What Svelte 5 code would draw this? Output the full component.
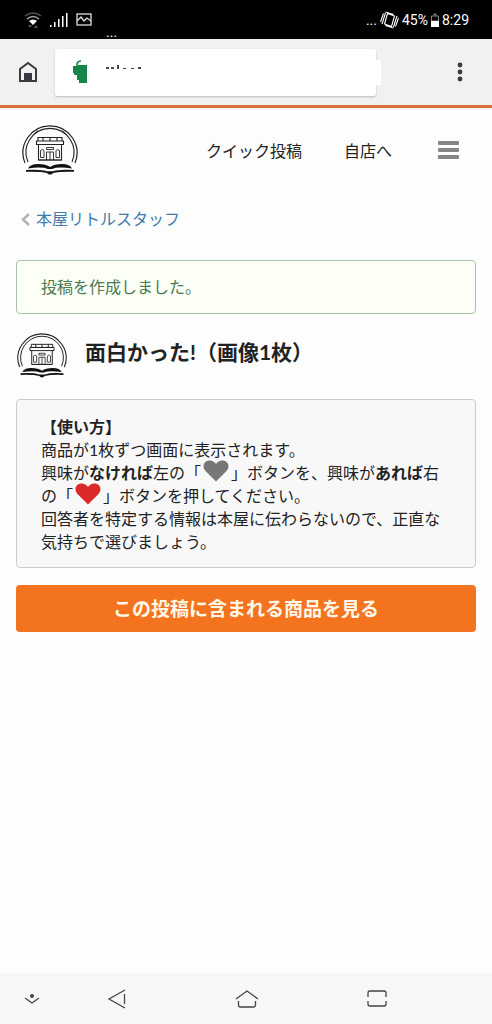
<script>
	let address = '';
	const signal = [2, 5, 8, 11, 14];
</script>

{#snippet shopLogo(size)}
	<svg class="logo {size}" viewBox="0 0 56 50" role="img" aria-label="本屋リトルスタッフ">
		<g fill="none" stroke="#222">
			<path d="M3 38A27 27 0 1 1 53 38" stroke-width="1.2" />
			<path d="M6 37A24 24 0 1 1 50 37" stroke-width="1.1" />
			<path d="M16 12.500h24v3.500H16zM14.500 16h27v3.500h-27zM16.500 19.500v15.500h23V19.500M21 12.500v3.500M28 12.500v3.500M35 12.500v3.500" stroke-width="1.1" />
			<path d="M18.500 32.500v-7q1.500-2 3.500 0v7zM34 32.500v-7q1.500-2 3.500 0v7zM24.500 35v-8h7v8M28 27v8M24.500 24.500v-2h7v2zM16.500 35h23" stroke-width=".9" />
		</g>
		<path d="M6 43.500Q8 39 16 39q8 0 12 3 4-3 12-3 8 0 10 4.500-14-2-20 .5h-4q-6-2.500-20-.5z" fill="#111" />
		<path d="M4 45q14-1 21 1.200h6Q38 44 52 45v1.800q-14-.5-21 1.200-1 1.500-3 1.500T25 48q-7-1.700-21-1.200z" fill="#111" />
	</svg>
{/snippet}

{#snippet heart(color)}
	<svg class="heart {color}" viewBox="0 0 26 22" aria-hidden="true">
		<path d="M13 21.500 2.500 11C-1.500 6.500 1 .5 6.500 .5 10 .5 12 2.500 13 4 14 2.500 16 .5 19.500 .5 25 .5 27.500 6.500 23.500 11z" />
	</svg>
{/snippet}

<div class="screen">
	<div class="status">
		<div class="status-left">
			<svg width="18" height="18" viewBox="0 0 18 18" fill="none">
				<path d="M1 5q8-6 16 0" stroke="#555" stroke-width="1.5" />
				<path d="M3 8q6-5 12 0" stroke="#aaa" stroke-width="1.5" />
				<path d="M5 10q4-3 8 0l-4 4z" fill="#fff" />
				<path d="M4 14h4l-2 3zM10 17h4l-2-3z" fill="#555" />
			</svg>
			<svg width="18" height="15" viewBox="0 0 18 15">
				{#each signal as h, i}
					<rect x={i * 4} y={15 - h} width="1.5" height={h} fill="#fff" />
				{/each}
			</svg>
			<svg width="16" height="13" viewBox="0 0 16 13" fill="none" stroke="#ddd" stroke-width="1.3">
				<rect x="1" y="1" width="14" height="11" />
				<path d="M1 8l4-4 3 4 3-3 4 3" />
			</svg>
			<span class="more">...</span>
		</div>
		<div class="status-right">
			<span>...</span>
			<svg width="19" height="18" viewBox="0 0 19 18" fill="none" stroke="#fff" stroke-width="1.1">
				<path d="M7.500 2.500 14.500 5 11.500 15.500 4.500 13zM5.500 2 2 13M3.500 2.500 .5 11M13.500 16 17 5M15.500 15.500l3-8.500M5.500 1l8 2.500M5.500 14.500l8 2.500" />
			</svg>
			<span>45%</span>
			<svg width="8" height="14" viewBox="0 0 8 14">
				<path d="M.5 3h7v5h-7zM3 1h2v1H3z" fill="none" stroke="#888" />
				<path d="M0 8h8v6H0z" fill="#fff" />
			</svg>
			<span>8:29</span>
		</div>
	</div>

	<div class="browser">
		<button class="plain" aria-label="ホーム">
			<svg width="20" height="22" viewBox="0 0 20 22">
				<path d="M2 20V8l8-6 8 6v12z" fill="none" stroke="#383a3f" stroke-width="2" />
				<path d="M6 12h8v8H6z" fill="#383a3f" />
			</svg>
		</button>
		<div class="address">
			<svg width="15" height="26" viewBox="0 0 15 26">
				<path d="M4 8Q3 2 8 2" fill="none" stroke="#15854a" stroke-width="1.6" />
				<path d="M0 7h4l1-1h9v18H6v-3H4v-5H1v-2H0z" fill="#15854a" />
			</svg>
			<svg class="trace" width="38" height="6" viewBox="0 0 38 6" fill="#444">
				<path d="M1 3h3v2H1zM6 3h3v2H6zM12 1h2v4h-2zM18 4h3v1h-3zM26 4h3v1h-3zM33 3h3v2h-3z" />
			</svg>
			<input type="text" aria-label="アドレス" bind:value={address} />
			<span class="patch"></span>
		</div>
		<button class="plain" aria-label="メニュー">
			<svg width="6" height="20" viewBox="0 0 6 20" fill="#383a3f">
				<circle cx="3" cy="3" r="2.4" />
				<circle cx="3" cy="10" r="2.4" />
				<circle cx="3" cy="17" r="2.4" />
			</svg>
		</button>
	</div>

	<header>
		<a href="/">{@render shopLogo('large')}</a>
		<nav>
			<a href="/quick">クイック投稿</a>
			<a href="/shop">自店へ</a>
		</nav>
		<button class="plain" aria-label="ナビゲーション">
			<svg width="21" height="18" viewBox="0 0 21 18" fill="#858585">
				<rect width="21" height="4" rx="1" />
				<rect y="7" width="21" height="4" rx="1" />
				<rect y="14" width="21" height="4" rx="1" />
			</svg>
		</button>
	</header>

	<main>
		<a class="back" href="/staff">
			<svg width="9" height="13" viewBox="0 0 9 13" fill="none" stroke="#b5b5b5" stroke-width="2.6">
				<path d="M8 1 2 6.500 8 12" />
			</svg>
			本屋リトルスタッフ
		</a>

		<div class="notice" role="status">投稿を作成しました。</div>

		<div class="post">
			{@render shopLogo('small')}
			<h1>面白かった!（画像1枚）</h1>
		</div>

		<section class="howto">
			<strong>【使い方】</strong><br />
			商品が1枚ずつ画面に表示されます。<br />
			興味が<strong>なければ</strong>左の「{@render heart('gray')}」ボタンを、興味が<strong>あれば</strong>右の「{@render heart('red')}」ボタンを押してください。<br />
			回答者を特定する情報は本屋に伝わらないので、正直な気持ちで選びましょう。
		</section>

		<button class="primary">この投稿に含まれる商品を見る</button>
	</main>

	<footer>
		<button class="plain" aria-label="バーを隠す">
			<svg width="16" height="12" viewBox="0 0 16 12">
				<circle cx="8" cy="3" r="2" fill="#444" />
				<path d="m1 5 7 5 7-5" fill="none" stroke="#444" stroke-width="1.2" />
			</svg>
		</button>
		<button class="plain" aria-label="戻る">
			<svg width="20" height="20" viewBox="0 0 20 20" fill="none" stroke="#444" stroke-width="1.3">
				<path d="M18 1 2 10l16 9M17.500 5v10" />
			</svg>
		</button>
		<button class="plain" aria-label="ホーム画面">
			<svg width="24" height="20" viewBox="0 0 24 20" fill="none" stroke="#444" stroke-width="1.3">
				<path d="M1 10 12 2l11 8M3.500 12v4q0 2 2 2h13q2 0 2-2v-4" />
			</svg>
		</button>
		<button class="plain" aria-label="履歴">
			<svg width="20" height="18" viewBox="0 0 20 18" fill="none" stroke="#444" stroke-width="1.3">
				<path d="M1 7V3q0-2 2-2h14q2 0 2 2v4M1 11v3q0 2 2 2h14q2 0 2-2v-3" />
			</svg>
		</button>
	</footer>
</div>

<style>
	:global(body) {
		margin: 0;
		background: #fdfdfd;
	}

	.screen {
		display: flex;
		flex-direction: column;
		min-height: 100vh;
		font-family: Lato, "Noto Sans CJK JP", sans-serif;
		font-size: 16px;
		color: #222;
	}

	svg {
		display: block;
		flex: none;
	}

	a {
		color: inherit;
		text-decoration: none;
	}

	.plain {
		display: flex;
		padding: 0;
		border: 0;
		background: none;
	}

	/* 端末のステータスバー */
	.status {
		display: flex;
		justify-content: space-between;
		align-items: center;
		height: 39px;
		padding: 0 23px 0 24px;
		background: #000;
		color: #fff;
		font-family: Roboto, sans-serif;
		font-size: 14px;
	}

	.status-left {
		display: flex;
		align-items: center;
		gap: 8px;
	}

	.more {
		padding: 24px 0 0 6px;
		line-height: 12px;
	}

	.status-right {
		display: flex;
		align-items: center;
		gap: 3px;
	}

	/* ブラウザのツールバー */
	.browser {
		display: flex;
		align-items: center;
		height: 66px;
		padding: 0 29px 0 18px;
		background: #f1f1f1;
		border-bottom: 3px solid #d9713a;
	}

	.address {
		position: relative;
		display: flex;
		align-items: center;
		flex: 1;
		height: 47px;
		margin: 0 81px 0 17px;
		padding-left: 18px;
		box-sizing: border-box;
		border-radius: 2px;
		background: #fff;
		box-shadow: 0 1px 2px #bbb;
	}

	.trace {
		align-self: flex-start;
		margin: 15px 0 0 17px;
	}

	.address input {
		flex: 1;
		min-width: 0;
		border: 0;
		outline: 0;
		background: none;
		font-size: 16px;
	}

	.patch {
		position: absolute;
		right: -5px;
		width: 8px;
		height: 25px;
		background: #fff;
	}

	/* サイトのヘッダー */
	header {
		display: flex;
		align-items: center;
		height: 84px;
		padding: 0 33px 0 22px;
	}

	nav {
		display: flex;
		gap: 42px;
		margin: 0 46px 0 auto;
	}

	.logo.large {
		width: 56px;
		height: 50px;
	}

	.logo.small {
		width: 50px;
		height: 45px;
	}

	main {
		flex: 1;
		padding: 0 16px;
	}

	.back {
		display: flex;
		align-items: center;
		gap: 6px;
		margin: 15px 0 29px;
		padding-left: 5px;
		line-height: 24px;
		color: #3e7cab;
	}

	.notice {
		padding: 14px 24px;
		border: 1px solid #a9c3a4;
		border-radius: 4px;
		background: #fcfff5;
		line-height: 24px;
		color: #4a7a50;
	}

	.post {
		display: flex;
		align-items: center;
		gap: 18px;
		margin: 19px 0 21px;
		padding-left: 1px;
	}

	h1 {
		margin: 0;
		padding-bottom: 8px;
		font-size: 21px;
		line-height: 32px;
		font-weight: 700;
	}

	.howto {
		padding: 15px 24px 14px;
		border: 1px solid #ccc;
		border-radius: 4px;
		background: #f8f8f8;
		line-height: 23px;
	}

	.heart {
		display: inline-block;
		width: 26px;
		height: 22px;
		margin: -6px 2px -2px;
		vertical-align: -1px;
	}

	.gray {
		fill: #777;
	}

	.red {
		fill: #dc2a2a;
	}

	.primary {
		display: block;
		width: 100%;
		margin-top: 17px;
		padding: 8px;
		border: 0;
		border-radius: 4px;
		background: #f4731e;
		color: #fff8e8;
		font-family: inherit;
		font-size: 19px;
		font-weight: 700;
		line-height: 31px;
	}

	/* 端末のナビゲーションバー */
	footer {
		display: grid;
		grid-template-columns: 4fr 13fr 13fr 13fr 5fr;
		align-items: center;
		height: 51px;
		padding-left: 12px;
		background: #f7f7f7;
	}

	footer .plain {
		justify-content: center;
	}
</style>
